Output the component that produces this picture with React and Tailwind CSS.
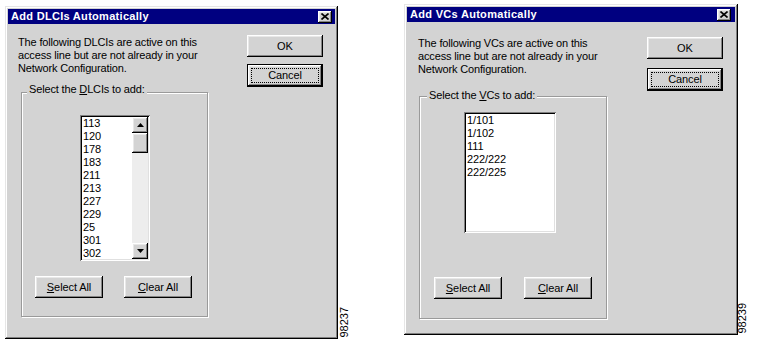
import React from "react";

const raised =
  "shadow-[inset_-1px_-1px_0_#000,inset_1px_1px_0_#fff,inset_-2px_-2px_0_#858585,inset_2px_2px_0_#e8e8e8]";
const sunken =
  "shadow-[inset_1px_1px_0_#808080,inset_-1px_-1px_0_#fff,inset_2px_2px_0_#000,inset_-2px_-2px_0_#e0e0e0]";

function Button({ children, className = "", focused = false }) {
  if (focused) {
    return (
      <div className={`flex border border-black bg-[#d3d3d3] ${className}`}>
        <div className={`flex flex-1 p-[3px] ${raised}`}>
          <div className="flex flex-1 items-center justify-center border border-dotted border-black">
            {children}
          </div>
        </div>
      </div>
    );
  }
  return (
    <div className={`flex items-center justify-center bg-[#d3d3d3] ${raised} ${className}`}>
      {children}
    </div>
  );
}

function Arrow({ down = false }) {
  return (
    <svg width="7" height="4" viewBox="0 0 7 4">
      <polygon points={down ? "0,0 7,0 3.5,4" : "0,4 7,4 3.5,0"} fill="#000" />
    </svg>
  );
}

function Scrollbar() {
  return (
    <div className="flex w-[16px] flex-col bg-[#ededed]">
      <div className={`flex h-[16px] items-center justify-center bg-[#d3d3d3] ${raised}`}>
        <Arrow />
      </div>
      <div className={`h-[20px] bg-[#d3d3d3] ${raised}`} />
      <div className="flex-1" />
      <div className={`flex h-[16px] items-center justify-center bg-[#d3d3d3] ${raised}`}>
        <Arrow down />
      </div>
    </div>
  );
}

function ListBox({ items, scroll, className }) {
  return (
    <div className={`flex bg-white p-[2px] ${sunken} ${className}`}>
      <div className="flex-1 pl-[1px] text-[11px] leading-[13px] tracking-[-0.1px] text-black">
        {items.map((item) => (
          <div key={item}>{item}</div>
        ))}
      </div>
      {scroll && <Scrollbar />}
    </div>
  );
}

function Dialog({ d }) {
  return (
    <div className={`flex flex-col bg-[#d3d3d3] p-[3px] shadow-[inset_-1px_-1px_0_#000,inset_1px_1px_0_#e6e6e6,inset_-2px_-2px_0_#808080,inset_2px_2px_0_#fff] ${d.outer}`}>
      <div className={`flex h-[15px] items-center justify-between bg-[#000080] pl-[3px] ${d.titlePr}`}>
        <span className="text-[11px] font-bold leading-none tracking-[0.3px] text-white">{d.title}</span>
        <div className={`flex h-[12px] w-[14px] items-center justify-center bg-[#d3d3d3] ${raised}`}>
          <svg width="8" height="7" viewBox="0 0 8 7">
            <path d="M0.5 0.5 L7.5 6.5 M7.5 0.5 L0.5 6.5" stroke="#000" strokeWidth="1.6" />
          </svg>
        </div>
      </div>
      <div className={`flex justify-between pr-[12px] ${d.body}`}>
        <div className="flex flex-col">
          <p className={`text-[11px] leading-[13px] tracking-[-0.15px] text-black ${d.descMt}`}>
            {d.desc[0]}
            <br />
            access line but are not already in your
            <br />
            Network Configuration.
          </p>
          <div className={`relative border border-[#9a9a9a] shadow-[inset_1px_1px_0_#fff,1px_1px_0_#fff] ${d.group}`}>
            <span className={`absolute bg-[#d3d3d3] px-[2px] text-[11px] leading-[13px] tracking-[-0.15px] text-black ${d.labelPos}`}>
              Select the <u>{d.key[0]}</u>
              {d.key.slice(1)} to add:
            </span>
            <ListBox items={d.items} scroll={d.scroll} className={d.list} />
            <div className={`flex ${d.btnRow}`}>
              <Button className="h-[22px] w-[68px] text-[11px] tracking-[-0.1px] text-black">
                <span>
                  <u>S</u>elect All
                </span>
              </Button>
              <Button className="h-[22px] w-[68px] text-[11px] tracking-[-0.1px] text-black">
                <span>
                  <u>C</u>lear All
                </span>
              </Button>
            </div>
          </div>
        </div>
        <div className={`flex flex-col ${d.btnGap}`}>
          <Button className="h-[22px] w-[76px] text-[11px] text-black">OK</Button>
          <Button focused className="h-[23px] w-[76px] text-[11px] tracking-[-0.1px] text-black">
            Cancel
          </Button>
        </div>
      </div>
    </div>
  );
}

const left = {
  title: "Add DLCIs Automatically",
  outer: "w-[333px]",
  titlePr: "pr-[3px]",
  body: "pt-[11px] pb-[19px] pl-[10px]",
  descMt: "mt-[1px]",
  desc: ["The following DLCIs are active on this"],
  group: "ml-[3px] mt-[17px] h-[225px] w-[187px]",
  labelPos: "left-[5px] top-[-10px]",
  key: "DLCIs",
  items: ["113", "120", "178", "183", "211", "213", "227", "229", "25", "301", "302"],
  scroll: true,
  list: "ml-[58px] mt-[22px] h-[146px] w-[70px]",
  btnRow: "mt-[15px] gap-[21px] pl-[13px]",
  btnGap: "gap-[7px]",
};

const right = {
  title: "Add VCs Automatically",
  outer: "w-[334px]",
  titlePr: "pr-[4px]",
  body: "pt-[15px] pb-[13px] pl-[11px]",
  descMt: "",
  desc: ["The following VCs are active on this"],
  group: "ml-[1px] mt-[20px] h-[223px] w-[188px]",
  labelPos: "left-[7px] top-[-8px]",
  key: "VCs",
  items: ["1/101", "1/102", "111", "222/222", "222/225"],
  scroll: false,
  list: "ml-[44px] mt-[15px] h-[121px] w-[92px]",
  btnRow: "mt-[44px] gap-[22px] pl-[14px]",
  btnGap: "gap-[9px]",
};

function FigureId({ children, className = "" }) {
  return (
    <span className={`rotate-180 text-[11px] leading-[10px] text-black [writing-mode:vertical-rl] ${className}`}>
      {children}
    </span>
  );
}

export default function App() {
  return (
    <div className="flex h-[358px] w-[780px] items-start bg-white pl-[5px] font-['Liberation_Sans',Arial,sans-serif]">
      <div className="mt-[6px] flex items-end">
        <Dialog d={left} />
        <FigureId className="ml-[1px] mb-[1px]">98237</FigureId>
      </div>
      <div className="ml-[55px] mt-[4px] flex items-end">
        <Dialog d={right} />
        <FigureId className="ml-[-1px] mb-[1px]">98239</FigureId>
      </div>
    </div>
  );
}
